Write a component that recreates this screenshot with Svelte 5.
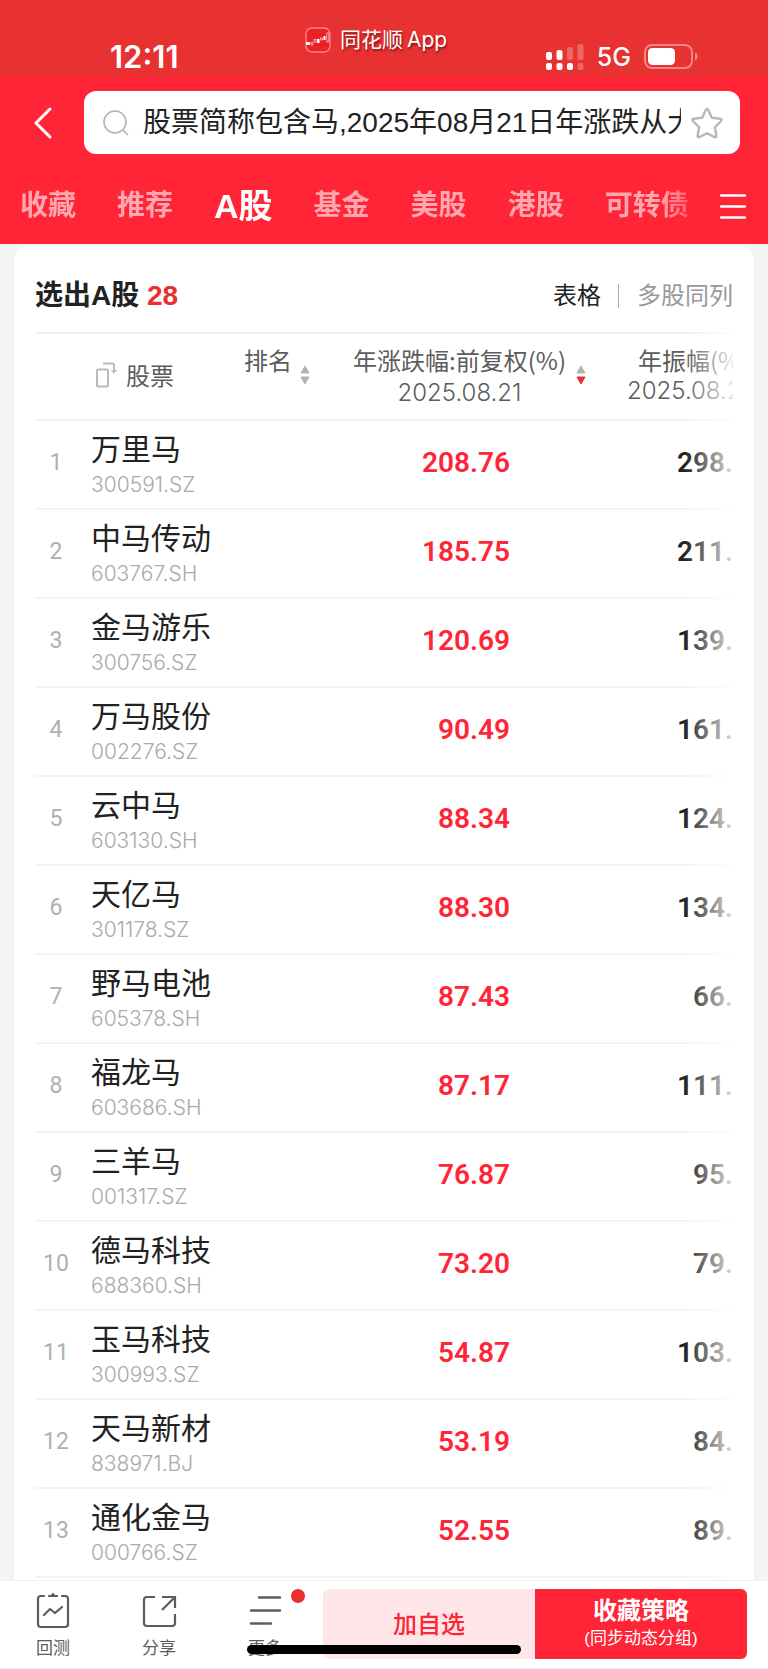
<script>
  const tabs = ['收藏', '推荐', 'A股', '基金', '美股', '港股', '可转债'];
  const active = 'A股';
  const stocks = [
    ['万里马', '300591.SZ', '208.76', '298.'],
    ['中马传动', '603767.SH', '185.75', '211.'],
    ['金马游乐', '300756.SZ', '120.69', '139.'],
    ['万马股份', '002276.SZ', '90.49', '161.'],
    ['云中马', '603130.SH', '88.34', '124.'],
    ['天亿马', '301178.SZ', '88.30', '134.'],
    ['野马电池', '605378.SH', '87.43', '66.'],
    ['福龙马', '603686.SH', '87.17', '111.'],
    ['三羊马', '001317.SZ', '76.87', '95.'],
    ['德马科技', '688360.SH', '73.20', '79.'],
    ['玉马科技', '300993.SZ', '54.87', '103.'],
    ['天马新材', '838971.BJ', '53.19', '84.'],
    ['通化金马', '000766.SZ', '52.55', '89.']
  ];
</script>

{#snippet sorter(desc)}
  <svg class="sorter" viewBox="0 0 10 20" aria-hidden="true">
    <path d="M5 1 9 8H1z" fill="#b3b3b3" stroke="#b3b3b3" stroke-linejoin="round" />
    <path d="M5 19 1 12h8z" fill={desc ? '#e93030' : '#b3b3b3'} stroke={desc ? '#e93030' : '#b3b3b3'} stroke-linejoin="round" />
  </svg>
{/snippet}

<div class="page">
  <div class="status">
    <span class="time">12:11</span>
    <span class="app">
      <svg viewBox="0 0 26 26" width="26" height="26" aria-hidden="true">
        <rect x="1" y="1" width="24" height="24" rx="6" fill="#ee2028" stroke="#f5868a" stroke-width="1.4" />
        <path d="M2 8h22M2 18h22" stroke="#d81820" stroke-width=".8" />
        <path d="M1 15h4v3H1zM12 12h2.500v4H12zM18.500 9h2v4h-2z" fill="#fff" />
        <path d="M6 15.500h2v2.500H6zM9 12.500h2v2.500H9zM15.500 11h2v2h-2zM21.800 6h2v9h-2z" fill="none" stroke="#ffc9cb" stroke-width=".8" />
      </svg>
      <span class="appname"><span>同花顺</span><span>App</span></span>
    </span>
    <span class="signals">
      <svg viewBox="0 0 38 28" width="38" height="28" aria-hidden="true">
        <g fill="#fff">
          <rect x="0" y="9" width="6" height="8" rx="2" /><rect x="10.500" y="7" width="6" height="10" rx="2" />
          <rect x="0" y="20" width="6" height="7" rx="2" /><rect x="10.500" y="20" width="6" height="7" rx="2" /><rect x="21" y="20" width="6" height="7" rx="2" />
        </g>
        <g fill="#f06566">
          <rect x="21" y="4" width="6" height="13" rx="2" /><rect x="31.500" y="1" width="6" height="16" rx="2" /><rect x="31.500" y="20" width="6" height="7" rx="2" />
        </g>
      </svg>
      <span>5G</span>
      <svg viewBox="0 0 54 26" width="54" height="26" aria-hidden="true">
        <rect x="1" y="1" width="47" height="23" rx="7" fill="none" stroke="#f28688" stroke-width="2" />
        <rect x="4" y="4" width="27" height="17" rx="4.500" fill="#fff" />
        <path d="M51 8.500c3.500 1 3.500 7 0 8z" fill="#f28688" />
      </svg>
    </span>
  </div>

  <header>
    <div class="searchrow">
      <button class="back" aria-label="返回">
        <svg viewBox="0 0 20 32" width="20" height="32"><path d="M17 2 3 16l14 14" fill="none" stroke="#fff" stroke-width="3" stroke-linecap="round" stroke-linejoin="round" /></svg>
      </button>
      <div class="search">
        <svg viewBox="0 0 26 26" width="26" height="26" aria-hidden="true"><g fill="none" stroke="#b3b3b3" stroke-width="1.600"><circle cx="12" cy="12" r="11" /><path d="m20 20 5 5" /></g></svg>
        <input aria-label="搜索" value="股票简称包含马,2025年08月21日年涨跌从大" />
        <button aria-label="收藏问句">
          <svg viewBox="0 0 32 32" width="32" height="32"><path d="M14.800 2.800q1.200-2 2.400 0l3.600 8 8.700 1q2 .5.600 2.200l-6.300 6.300 1.600 8.500q0 2-1.900 1.300L16 26.200l-7.500 3.900q-1.900.7-1.900-1.300l1.600-8.500L1.900 14q-1.400-1.700.6-2.200l8.700-1z" fill="none" stroke="#b8b8b8" stroke-width="2.400" stroke-linejoin="round" /></svg>
        </button>
      </div>
    </div>
    <div class="tabrow">
      <nav>
        {#each tabs as tab}
          <a href="#{tab}" class:active={tab === active}>{tab}</a>
        {/each}
      </nav>
      <button aria-label="全部分类">
        <svg viewBox="0 0 26 26" width="26" height="26"><path d="M1 2.500h24M1 13.500h24M1 24.500h24" stroke="#fff" stroke-width="2.400" stroke-linecap="round" /></svg>
      </button>
    </div>
  </header>

  <main>
    <section class="card">
      <div class="title">
        <h1>选出A股 <b>28</b></h1>
        <div class="views"><button class="on">表格</button><i></i><button>多股同列</button></div>
      </div>
      <div class="tablebox">
        <table>
          <colgroup><col class="c1" /><col class="c2" /><col class="c3" /><col /><col class="c5" /></colgroup>
          <thead>
            <tr>
              <th colspan="2">
                <div class="stockhead">
                  <svg viewBox="0 0 22 26" width="22" height="26" aria-hidden="true"><g fill="none" stroke="#bababa" stroke-width="2"><rect x="1" y="7.500" width="11" height="17" rx="1" /><path d="M7 1.500h9.500q1.500 0 1.500 1.500v7" /></g><path d="m14.500 8 3.500 3.500L21.500 8z" fill="#bababa" /></svg>
                  股票
                </div>
              </th>
              <th><div class="sorthead"><span>排名</span>{@render sorter(false)}</div></th>
              <th><div class="sorthead change"><span>年涨跌幅:前复权(%)<br /><em>2025.08.21</em></span>{@render sorter(true)}</div></th>
              <th><div class="sorthead swing"><span>年振幅(%)</span><em>2025.08.21</em></div></th>
            </tr>
          </thead>
          <tbody>
            {#each stocks as [name, code, change, swing], i}
              <tr>
                <td class="no">{i + 1}</td>
                <td class="stock" colspan="2"><strong>{name}</strong><small>{code}</small></td>
                <td class="num change">{change}</td>
                <td class="num">{swing}</td>
              </tr>
            {/each}
          </tbody>
        </table>
        <div class="fade"></div>
      </div>
    </section>
  </main>

  <footer>
    <div class="tools">
      <button>
        <svg viewBox="0 0 36 38" width="36" height="38" aria-hidden="true"><g fill="none" stroke="#5c5c5c" stroke-width="2.200" stroke-linecap="round" stroke-linejoin="round"><path d="M9 4H6Q3 4 3 7v25q0 3 3 3h24q3 0 3-3V7q0-3-3-3h-3M14 4h8" /><path d="m9 23 6-6 5 4 7-6" /></g><path d="M12.500 4.500h11L20 3l-2-2.500L16 3z" fill="#5c5c5c" /></svg>
        <span>回测</span>
      </button>
      <button>
        <svg viewBox="0 0 36 38" width="36" height="38" aria-hidden="true"><path d="M14 5H6Q3 5 3 8v23q0 3 3 3h25q3 0 3-3v-9M21 5h13v11M33 6 21 18" fill="none" stroke="#5c5c5c" stroke-width="2.200" stroke-linecap="butt" /></svg>
        <span>分享</span>
      </button>
      <button>
        <svg viewBox="0 0 36 38" width="36" height="38" aria-hidden="true"><path d="M12 5.500h21M4 18.500h29M4 31.500h20" stroke="#5c5c5c" stroke-width="2.400" stroke-linecap="round" /></svg>
        <span>更多</span>
        <i class="dot"></i>
      </button>
    </div>
    <div class="actions">
      <button class="add">加自选</button>
      <button class="save"><b>收藏策略</b><span>(同步动态分组)</span></button>
    </div>
    <div class="home"></div>
  </footer>
</div>

<style>
  :global(body) { margin: 0; background: #f4f4f4; }
  .page { font-family: "Liberation Sans", "Noto Sans CJK SC", sans-serif; color: #222; overflow: hidden; }
  button { border: 0; padding: 0; background: none; font: inherit; color: inherit; cursor: pointer; }
  svg { display: block; flex: none; }

  .status { display: grid; grid-template-columns: 1fr auto 1fr; height: 77px; background: #e83131; color: #fff; }
  .time { padding: 38px 0 0 110px; font: 600 31px/38px Inter, sans-serif; }
  .app { display: flex; gap: 9px; padding: 26px 16px 0 0; height: 28px; align-items: center; font: 21px/28px Inter, "Noto Sans CJK SC", sans-serif; text-shadow: 1px 2px 2px #8a1717; }
  .appname { display: flex; gap: 4px; }
  .signals { display: flex; justify-content: flex-end; align-items: center; gap: 13px; height: 28px; padding: 43px 70px 0 0; font: 500 25px/28px Inter, sans-serif; }

  header { background: #ff2436; padding-top: 14px; }
  .searchrow { display: flex; align-items: center; padding: 0 28px 0 33px; }
  .back { width: 51px; height: 63px; display: flex; align-items: center; }
  .search { flex: 1; min-width: 0; height: 63px; display: flex; align-items: center; padding: 0 17px 0 19px; background: #fff; border-radius: 12px; box-sizing: border-box; }
  .search input { flex: 1; min-width: 0; height: 42px; margin: 0 10px 0 14px; padding: 0; border: 0; outline: 0; background: none; color: #222; font: 28px/42px "Liberation Sans", "Noto Sans CJK SC", sans-serif; box-sizing: border-box; }
  .tabrow { display: flex; align-items: center; height: 76px; padding: 14px 22px 0 20px; }
  nav { flex: 1; min-width: 0; display: flex; align-items: center; gap: 41px; height: 76px; overflow: hidden; white-space: nowrap; -webkit-mask-image: linear-gradient(to left, rgba(0, 0, 0, .4), #000 32px); mask-image: linear-gradient(to left, rgba(0, 0, 0, .4), #000 32px); }
  nav a { color: #ffa7af; font-size: 28px; line-height: 40px; font-weight: 700; text-decoration: none; }
  nav a.active { color: #fff; font-size: 34px; }
  .tabrow button { margin-left: 28px; }

  main { padding: 2px 14px 0; }
  .card { background: #fff; border-radius: 14px 14px 0 0; padding: 0 21px 2px; }
  .title { display: flex; justify-content: space-between; align-items: center; height: 72px; padding-top: 14px; }
  h1 { margin: 0; font-size: 28px; line-height: 40px; font-weight: 700; }
  h1 b { color: #e93030; }
  .views { display: flex; align-items: center; font-size: 24px; line-height: 36px; color: #999; }
  .views .on { color: #222; }
  .views i { width: 1px; height: 24px; margin: 0 18px 0 17px; background: #aaa; }
  .tablebox { position: relative; }
  table { width: 100%; table-layout: fixed; border-collapse: collapse; }
  .c1 { width: 42px; } .c2 { width: 152px; } .c3 { width: 96px; } .c5 { width: 137px; }
  th { height: 81px; padding: 0 0 4px; border-top: 2px solid #f1f1f1; border-bottom: 2px solid #f4f4f4; vertical-align: middle; text-align: left; font: 24px/31px "Noto Sans CJK SC", sans-serif; color: #5c5c5c; white-space: nowrap; overflow: hidden; }
  th em { font: 300 24px/31px Inter, sans-serif; }
  .stockhead { display: flex; align-items: center; gap: 8px; padding-left: 61px; }
  .sorthead { display: flex; align-items: center; gap: 8px; height: 62px; padding-left: 15px; }
  .sorthead span { align-self: flex-start; text-align: center; }
  .sorthead.change { padding-left: 28px; gap: 10px; }
  .sorthead.swing { flex-direction: column; align-items: flex-start; gap: 0; padding-left: 31px; }
  .swing span { padding-left: 11px; }
  .sorter { width: 10px; height: 20px; }
  td { height: 87px; padding: 0; border-bottom: 2px solid #f4f4f4; }
  .no { text-align: center; color: #b0b0b0; font: 23px/30px Roboto, sans-serif; }
  .stock { padding-left: 14px; }
  .stock strong { display: block; font-weight: 400; font-size: 30px; line-height: 40px; }
  .stock small { display: block; color: #aaa; font: 300 21px/30px Inter, sans-serif; }
  .num { text-align: right; font: 600 28px/36px Roboto, sans-serif; white-space: nowrap; }
  td.no, td.num { height: 83px; padding-bottom: 4px; }
  td.change { color: #ff2436; padding-right: 86px; }
  .fade { position: absolute; top: 0; right: -8px; bottom: 0; width: 56px; background: linear-gradient(to right, rgba(255, 255, 255, 0), #fff); pointer-events: none; }

  footer { position: relative; display: flex; height: 87px; background: #fff; border-top: 1px solid #f1f1f1; }
  .tools { display: flex; }
  .tools button { position: relative; width: 106px; display: flex; flex-direction: column; align-items: center; padding-top: 11px; color: #5c5c5c; font-size: 17px; line-height: 24px; }
  .tools span { margin-top: 7px; }
  .dot { position: absolute; top: 8px; right: 13px; width: 14px; height: 14px; border-radius: 50%; background: #e93030; }
  .actions { flex: 1; display: grid; grid-template-columns: 1fr 1fr; height: 70px; margin: 8px 21px 0 5px; border-radius: 6px; overflow: hidden; }
  .add { padding-bottom: 4px; background: #ffe7e9; color: #ff2436; font-size: 24px; font-weight: 500; }
  .save { display: flex; flex-direction: column; align-items: center; justify-content: center; background: #ff2436; color: #fff; }
  .save b { font-size: 24px; line-height: 30px; font-weight: 700; }
  .save span { font-size: 17px; line-height: 26px; }
  .home { position: absolute; left: 50%; bottom: 14px; width: 274px; height: 9px; transform: translateX(-50%); border-radius: 5px; background: #000; }
</style>
